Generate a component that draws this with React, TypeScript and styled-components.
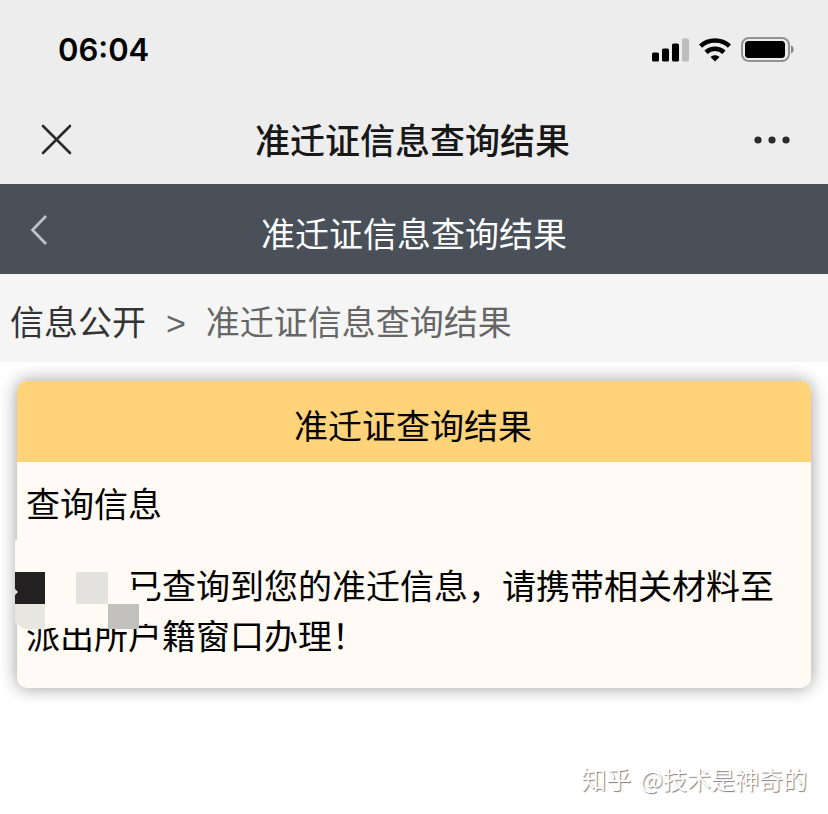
import React from 'react';
import styled, { createGlobalStyle } from 'styled-components';

const GlobalStyle = createGlobalStyle`
  * { box-sizing: border-box; }
  body {
    margin: 0;
    background: #fff;
    color: #000;
    font-family: "Noto Sans CJK SC", sans-serif;
    font-weight: 400;
    font-size: 34px;
    line-height: 50px;
  }
  h1, h2, h3, p { margin: 0; font: inherit; }
  button { border: 0; padding: 0; background: none; cursor: pointer; display: flex; }
`;

const Page = styled.div`
  display: flex;
  flex-direction: column;
`;

const StatusBar = styled.div`
  display: flex;
  align-items: center;
  justify-content: space-between;
  height: 96px;
  padding: 4px 33px 0 58px;
  background: #ededed;
`;

const Clock = styled.time`
  font-family: Inter, sans-serif;
  font-size: 31px;
  font-weight: 600;
`;

const StatusIcons = styled.div`
  display: flex;
  align-items: center;
  gap: 10px;
`;

const Bar = styled.header<{ $tone: 'light' | 'dark' }>`
  display: grid;
  grid-template-columns: 48px 1fr 48px;
  align-items: center;
  height: ${p => (p.$tone === 'light' ? 88 : 90)}px;
  padding: ${p => (p.$tone === 'light' ? '0 32px' : '8px 24px 0')};
  background: ${p => (p.$tone === 'light' ? '#ededed' : '#495059')};
  color: ${p => (p.$tone === 'light' ? '#181818' : '#fff')};
  text-align: center;
`;

const Title = styled.h1`
  && { padding: 0 3px 2px 0; font-size: 35px; font-weight: 500; }
`;

const IconButton = styled.button<{ $end?: boolean }>`
  justify-content: ${p => (p.$end ? 'flex-end' : 'flex-start')};
  color: inherit;
`;

const Breadcrumb = styled.nav`
  display: flex;
  align-items: center;
  gap: 20px;
  height: 88px;
  padding: 6px 10px 0;
  background: #f5f5f5;
  color: #666;
`;

const Crumb = styled.a`
  color: #333;
  text-decoration: none;
`;

const Separator = styled.span`
  padding-top: 4px;
  font-family: "Liberation Sans", sans-serif;
`;

const Card = styled.section`
  margin: 19px 17px 0;
  border-radius: 10px;
  background: #fffaf3;
  box-shadow: 0 0 18px rgba(0, 0, 0, 0.4);
`;

const CardTitle = styled.h2`
  && { padding: 19px 2px 12px 0; }
  border-radius: 10px 10px 0 0;
  background: #fed37a;
  text-align: center;
`;

const CardBody = styled.div`
  display: flex;
  flex-direction: column;
  gap: 32px;
  padding: 16px 10px 28px 9px;
`;

const Message = styled.p`
  && { position: relative; text-indent: 102px; }
`;

const Mosaic = styled.svg`
  position: absolute;
  left: -11px;
  top: -20px;
`;

const Watermark = styled.footer`
  display: flex;
  align-items: baseline;
  justify-content: flex-end;
  gap: 9px;
  padding: 65px 21px 0 0;
  color: #fff;
  font-size: 24px;
  font-weight: 400;
  text-shadow: 1px 1px 1px rgba(0, 0, 0, 0.5);
`;

const Brand = styled.span`
  font-size: 25px;
`;

const Signal = () => (
  <svg width="37" height="24" viewBox="0 0 37 24" role="img" aria-label="信号">
    <rect x="0" y="14.500" width="7" height="9" rx="1.500" />
    <rect x="10" y="10.500" width="7" height="13" rx="1.500" />
    <rect x="20" y="5.500" width="7" height="18" rx="1.500" />
    <rect x="30" y="0.500" width="7" height="23" rx="1.500" fill="#bdbdbd" />
  </svg>
);

const Wifi = () => (
  <svg width="32" height="24" viewBox="0 0 32 24" role="img" aria-label="无线网络">
    <g fill="none" stroke="#000" strokeWidth="4.600">
      <path d="M1.500 8.200C9.500 0.600 22.500 0.600 30.500 8.200" />
      <path d="M7 14.200C12.200 9.500 19.800 9.500 25 14.200" />
    </g>
    <path d="M11.500 19C14 16.600 18 16.600 20.500 19L16 23.500Z" />
  </svg>
);

const Battery = () => (
  <svg width="54" height="26" viewBox="0 0 54 26" role="img" aria-label="电池">
    <rect x="1" y="1" width="47" height="23" rx="7" fill="none" stroke="#929292" strokeWidth="2" />
    <rect x="4" y="4" width="40" height="17" rx="3.500" />
    <path d="M50 8.500C53.500 9.500 53.500 15.500 50 16.500Z" fill="#858585" />
  </svg>
);

export default function App() {
  return (
    <Page>
      <GlobalStyle />
      <StatusBar>
        <Clock>06:04</Clock>
        <StatusIcons>
          <Signal />
          <Wifi />
          <Battery />
        </StatusIcons>
      </StatusBar>
      <Bar $tone="light">
        <IconButton aria-label="关闭">
          <svg width="48" height="48" viewBox="0 0 48 48" stroke="#2b2b2b" strokeWidth="2.600" strokeLinecap="round">
            <path d="M11 10L38 37M38 10L11 37" />
          </svg>
        </IconButton>
        <Title>准迁证信息查询结果</Title>
        <IconButton $end aria-label="更多">
          <svg width="48" height="48" viewBox="0 0 48 48" fill="#2b2b2b">
            <circle cx="10" cy="24" r="3.600" />
            <circle cx="24" cy="24" r="3.600" />
            <circle cx="38" cy="24" r="3.600" />
          </svg>
        </IconButton>
      </Bar>
      <Bar as="div" $tone="dark">
        <IconButton aria-label="返回">
          <svg width="48" height="48" viewBox="0 0 48 48" fill="none" stroke="#bcc2c9" strokeWidth="2.800">
            <path d="M22 7L8.500 21L22 35" />
          </svg>
        </IconButton>
        <h2>准迁证信息查询结果</h2>
      </Bar>
      <Breadcrumb aria-label="位置">
        <Crumb href="#">信息公开</Crumb>
        <Separator>&gt;</Separator>
        <span>准迁证信息查询结果</span>
      </Breadcrumb>
      <Card>
        <CardTitle>准迁证查询结果</CardTitle>
        <CardBody>
          <h3>查询信息</h3>
          <Message>
            已查询到您的准迁信息，请携带相关材料至派出所户籍窗口办理！
            <Mosaic width="134" height="90" viewBox="0 0 134 90" aria-hidden="true">
              <path d="M0 0H116V50H132V84H124V88H10Q0 88 0 78Z" fill="#fffaf3" />
              <rect y="32" width="30" height="32" fill="#222021" />
              <path d="M0 49L3 52L0 55Z" fill="#e8e6e1" />
              <path d="M0 64H30V89H12Q0 87 0 78Z" fill="#e8e6e1" />
              <rect x="61" y="32" width="32" height="32" fill="#e3e2de" />
              <rect x="93" y="64" width="31" height="25" fill="#c3c1be" />
            </Mosaic>
          </Message>
        </CardBody>
      </Card>
      <Watermark>
        <Brand>知乎</Brand>
        <span>@技术是神奇的</span>
      </Watermark>
    </Page>
  );
}
